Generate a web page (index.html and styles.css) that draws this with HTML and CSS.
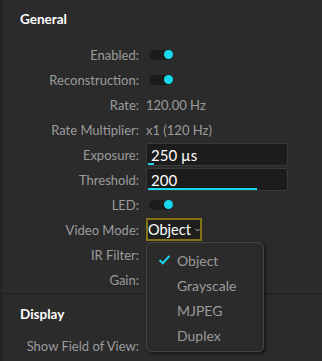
FILE: index.html
```html
<!DOCTYPE html>
<html>
<head>
<meta charset="utf-8">
<link rel="stylesheet" href="styles.css">
</head>
<body>
<div class="panel">
  <section class="section general">
    <h2 class="title">General</h2>
    <div class="form">
      <div class="row"><span class="label">Enabled:</span><span class="toggle on"><span class="knob"></span></span></div>
      <div class="row"><span class="label">Reconstruction:</span><span class="toggle on"><span class="knob"></span></span></div>
      <div class="row"><span class="label">Rate:</span><span class="value">120.00 Hz</span></div>
      <div class="row"><span class="label">Rate Multiplier:</span><span class="value">x1 (120 Hz)</span></div>
      <div class="row"><span class="label">Exposure:</span><span class="input"><span class="input-text">250 µs</span><span class="bar" style="width:6px"></span></span></div>
      <div class="row"><span class="label">Threshold:</span><span class="input"><span class="input-text">200</span><span class="bar" style="width:109px"></span></span></div>
      <div class="row"><span class="label">LED:</span><span class="toggle on"><span class="knob"></span></span></div>
      <div class="row"><span class="label">Video Mode:</span><span class="select">Object<svg class="chev" width="8" height="6" viewBox="0 0 8 6"><path d="M1 1.5 L4 4.5 L7 1.5" fill="none" stroke="#e6e6e6" stroke-width="1.2"/></svg></span></div>
      <div class="row"><span class="label">IR Filter:</span></div>
      <div class="row"><span class="label">Gain:</span></div>
    </div>
  </section>
  <section class="section display">
    <h2 class="title">Display</h2>
    <div class="form">
      <div class="row"><span class="label">Show Field of View:</span><span class="toggle on"><span class="knob"></span></span></div>
    </div>
  </section>
  <div class="menu">
    <div class="item selected"><svg class="check" width="13" height="11" viewBox="0 0 13 11"><path d="M1.5 6 L4.8 9.2 L11.5 1.8" fill="none" stroke="#18d8f0" stroke-width="2"/></svg><span>Object</span></div>
    <div class="item"><span>Grayscale</span></div>
    <div class="item"><span>MJPEG</span></div>
    <div class="item"><span>Duplex</span></div>
  </div>
</div>
</body>
</html>
```
FILE: styles.css
```css
html, body {
  margin: 0;
  padding: 0;
}
body {
  width: 322px;
  height: 361px;
  overflow: hidden;
  background: #2b2b2b;
  font-family: Lato, "Open Sans", sans-serif;
  color: #9b9b9b;
}
.panel {
  position: relative;
  height: 361px;
  border-left: 2px solid #232323;
  box-sizing: border-box;
}
.section {
  padding-left: 18px;
}
.general {
  padding-top: 10px;
  padding-bottom: 1px;
  border-bottom: 1px solid #1f1f1f;
}
.title {
  margin: 0;
  font-size: 13.5px;
  font-weight: 700;
  color: #ffffff;
  line-height: 18px;
}
.form {
  padding-top: 14px;
  display: flex;
  flex-direction: column;
}
.row {
  height: 25px;
  display: grid;
  grid-template-columns: 119px 1fr;
  column-gap: 7px;
  align-items: center;
  font-size: 13px;
}
.label {
  text-align: right;
  white-space: nowrap;
}
.value {
  color: #9b9b9b;
}
.toggle {
  margin-left: 3px;
  width: 24px;
  height: 10px;
  border-radius: 5px;
  background: #1c1c1c;
  position: relative;
}
.toggle .knob {
  position: absolute;
  right: 0;
  top: 50%;
  width: 9px;
  height: 9px;
  margin-top: -4.5px;
  border-radius: 50%;
  background: #18d8f0;
}
.input {
  width: 142px;
  height: 23px;
  box-sizing: border-box;
  border: 1px solid #3a3a3a;
  border-radius: 3px;
  background: #1c1c1c;
  position: relative;
  display: flex;
  align-items: center;
  overflow: hidden;
}
.input-text {
  color: #ffffff;
  font-size: 15px;
  padding-left: 4px;
}
.bar {
  position: absolute;
  left: 1px;
  bottom: 0;
  height: 2px;
  background: #18d8f0;
}
.select {
  width: 56px;
  height: 23px;
  box-sizing: border-box;
  border: 2px solid #827314;
  background: #1e1e1e;
  color: #ffffff;
  font-size: 14.5px;
  display: flex;
  align-items: center;
  padding-left: 0;
  gap: 4px;
}
.chev {
  display: block;
  margin-top: 1px;
}
.display {
  padding-top: 11px;
}
.display .form {
  padding-top: 10px;
}
.menu {
  position: absolute;
  left: 144px;
  top: 242px;
  width: 118px;
  height: 110px;
  box-sizing: border-box;
  background: #2b2b2b;
  border: 1px solid #444444;
  border-radius: 5px;
  box-shadow: 2px 2px 3px rgba(0, 0, 0, 0.45);
  padding-top: 5px;
  display: flex;
  flex-direction: column;
}
.item {
  height: 25px;
  display: flex;
  align-items: center;
  padding-left: 30px;
  position: relative;
  font-size: 14px;
  color: #9b9b9b;
}
.check {
  position: absolute;
  left: 11px;
  top: 6px;
}
```
